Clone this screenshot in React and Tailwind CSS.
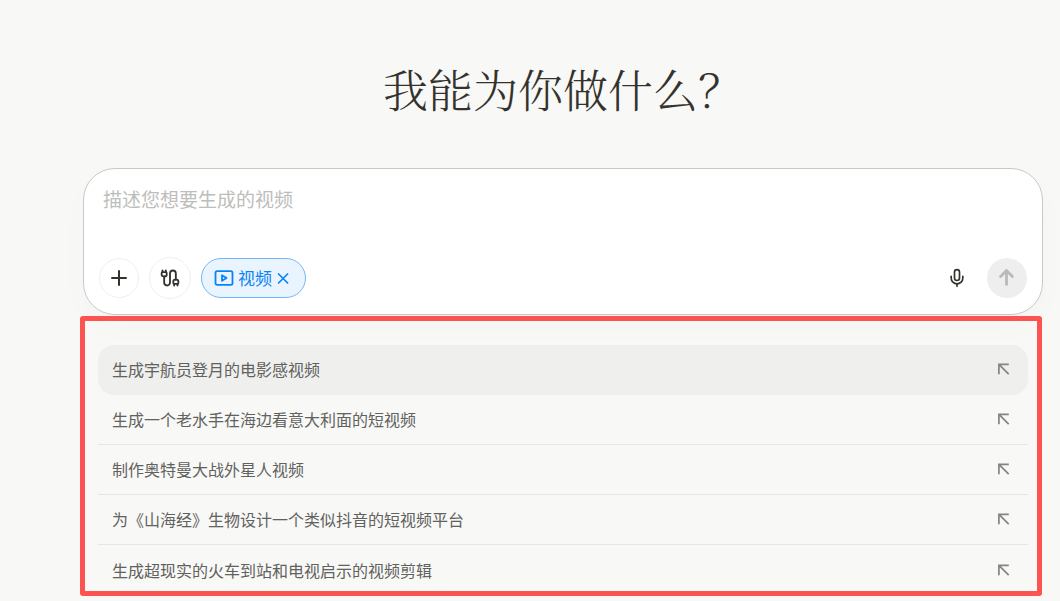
import { Cable, Mic, Plus } from 'lucide-react';

const suggestions = [
  '生成宇航员登月的电影感视频',
  '生成一个老水手在海边看意大利面的短视频',
  '制作奥特曼大战外星人视频',
  '为《山海经》生物设计一个类似抖音的短视频平台',
  '生成超现实的火车到站和电视启示的视频剪辑',
];

function VideoIcon() {
  return (
    <svg width="20" height="20" viewBox="0 0 20 20" fill="none" stroke="currentColor" strokeWidth="1.8" strokeLinejoin="round" aria-hidden="true">
      <rect x="1.5" y="3.2" width="17" height="13.6" rx="1.6" />
      <path d="M8 7.2v5.6l4.6-2.8z" />
    </svg>
  );
}

function CloseIcon() {
  return (
    <svg width="17" height="17" viewBox="0 0 17 17" fill="none" stroke="currentColor" strokeWidth="1.7" strokeLinecap="round" aria-hidden="true">
      <path d="M2.6 4l9 9M11.6 4l-9 9" />
    </svg>
  );
}

function SendIcon() {
  return (
    <svg width="20" height="20" viewBox="0 0 20 20" fill="none" stroke="currentColor" strokeWidth="2.8" strokeLinecap="round" strokeLinejoin="round" aria-hidden="true">
      <path d="M9.5 16.4V2.8M3.6 8.4l5.9-5.8 5.9 5.8" />
    </svg>
  );
}

function InsertIcon() {
  return (
    <svg width="20" height="20" viewBox="0 0 20 20" fill="none" stroke="currentColor" strokeWidth="1.7" className="shrink-0 text-[#858481]" aria-hidden="true">
      <path d="M4.9 15.2V5.4H14.8M4.9 5.4L14.7 15.2" />
    </svg>
  );
}

function Composer() {
  return (
    <form className="rounded-[32px] border border-[#c9c9c8] bg-white px-[15px] py-[15px] shadow-[0_12px_32px_rgba(0,0,0,0.02)]">
      <textarea
        aria-label="描述您想要生成的视频"
        placeholder="描述您想要生成的视频"
        className="block h-14 w-full resize-none bg-transparent px-1 text-[19px] leading-[30px] text-[#34322d] outline-none placeholder:text-[#bdbdbb]"
      />
      <div className="mt-[17px] flex items-center justify-between">
        <div className="flex items-center gap-[10px]">
          <button type="button" aria-label="添加" className="flex size-10 items-center justify-center rounded-full border border-[#efefee] text-[#34322d]">
            <Plus size={24} strokeWidth={2} />
          </button>
          <button type="button" aria-label="连接器" className="flex size-[42px] items-center justify-center rounded-full border border-[#efefee] text-[#34322d]">
            <Cable size={20} strokeWidth={2.2} />
          </button>
          <button type="button" className="flex h-10 items-center gap-1 rounded-full border border-[#72b8f8] bg-[#eaf4fe] px-3 text-[17px] leading-6 text-[#0a84f5]">
            <VideoIcon />
            <span>视频</span>
            <CloseIcon />
          </button>
        </div>
        <div className="flex items-center gap-5">
          <button type="button" aria-label="语音输入" className="flex size-5 items-center justify-center text-[#34322d]">
            <Mic size={20} strokeWidth={2} />
          </button>
          <button type="submit" aria-label="发送" className="flex size-10 items-center justify-center rounded-full bg-[#eeeeee] text-[#b9b9b8]">
            <SendIcon />
          </button>
        </div>
      </div>
    </form>
  );
}

function Suggestions() {
  return (
    <section className="relative px-[15px] pt-[30px]">
      <ul>
        {suggestions.map((text) => (
          <li key={text} className="group">
            <button
              type="button"
              className="flex h-[50px] w-full items-center justify-between border-b border-[#e6e6e5] px-[14px] pb-0.5 text-left text-base text-[#62615d] group-first:rounded-2xl group-first:border-transparent group-first:bg-[#efefee] group-last:border-transparent group-last:pb-0"
            >
              <span>{text}</span>
              <InsertIcon />
            </button>
          </li>
        ))}
      </ul>
      <div className="pointer-events-none absolute top-px right-px -bottom-px -left-[3px] rounded-[3px] border-[5px] border-[#fd5252]" />
    </section>
  );
}

function App() {
  return (
    <div className="min-h-screen bg-[#f8f8f7] font-['Noto_Sans_CJK_SC',sans-serif]">
      <main className="pr-[17px] pl-[83px] pt-[63px]">
        <h1 className="mb-[45px] text-center font-['Liberation_Serif','Noto_Serif_CJK_SC','Noto_Sans_CJK_SC',serif] text-[45px] leading-[60px] font-light text-[#34322d]">
          我能为你做什么？
        </h1>
        <Composer />
        <Suggestions />
      </main>
    </div>
  );
}

export default App;
